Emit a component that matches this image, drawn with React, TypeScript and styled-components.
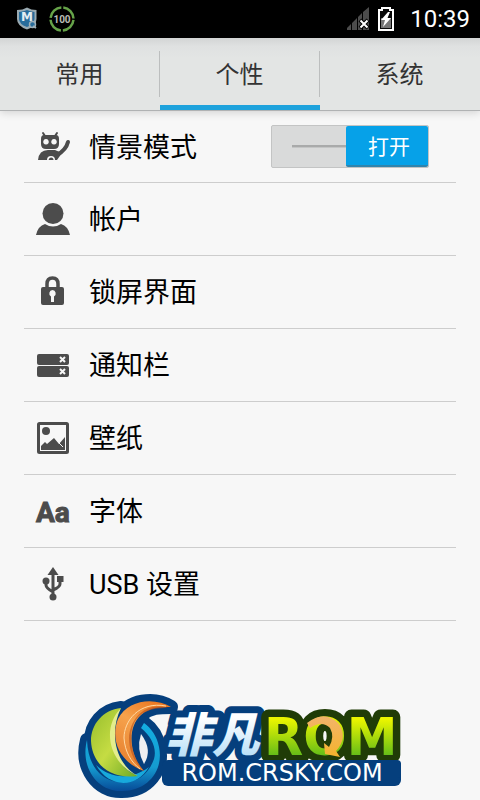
import React, { useState } from "react";
import styled, { createGlobalStyle } from "styled-components";

const GlobalStyle = createGlobalStyle`
  *, *::before, *::after { box-sizing: border-box; }
  body {
    margin: 0;
    background: #f7f7f7;
    font-family: Roboto, "Noto Sans CJK SC", sans-serif;
    color: #000;
  }
  button { font: inherit; color: inherit; border: 0; padding: 0; background: none; cursor: pointer; }
`;

const Page = styled.div`
  display: flex;
  flex-direction: column;
  min-height: 100vh;
`;

const StatusBar = styled.header`
  display: flex;
  align-items: center;
  justify-content: space-between;
  height: 38px;
  padding: 0 10px 0 16px;
  background: #000;
  color: #fff;
`;

const StatusGroup = styled.div<{ $gap: number }>`
  display: flex;
  align-items: center;
  gap: ${(p) => p.$gap}px;
`;

const Clock = styled.time`
  margin-left: 8px;
  font-size: 24px;
  line-height: 38px;
`;

const TabBar = styled.nav`
  display: grid;
  grid-template-columns: repeat(3, 1fr);
  height: 73px;
  border-bottom: 1px solid #b0b2b3;
  background: linear-gradient(#d3d5d5, #dfe1e1 8px, #e3e5e4 20px);
  box-shadow: 0 2px 8px rgba(0, 0, 0, 0.14);
`;

const Tab = styled.button<{ $active: boolean }>`
  display: flex;
  align-items: center;
  justify-content: center;
  padding-top: 4px;
  border-bottom: 5px solid ${(p) => (p.$active ? "#1ea2dc" : "transparent")};
`;

const TabLabel = styled.span<{ $divided: boolean }>`
  flex: 1;
  height: 46px;
  border-right: 1px solid ${(p) => (p.$divided ? "#bcbebe" : "transparent")};
  color: #333;
  font-size: 24px;
  line-height: 48px;
`;

const List = styled.ul`
  margin: 0 24px;
  padding: 0;
  list-style: none;
`;

const Row = styled.li`
  display: flex;
  align-items: center;
  height: 73px;
  padding-right: 27px;
  border-bottom: 1px solid #cdcdcd;
  &:first-child { height: 72px; }
`;

const RowButton = styled.button`
  display: flex;
  flex: 1;
  align-items: center;
  height: 100%;
  gap: 18px;
  padding-left: 11px;
  text-align: left;
`;

const RowIcon = styled.svg`
  flex: none;
  width: 36px;
  height: 36px;
  fill: #4c4c4c;
`;

const RowLabel = styled.span`
  padding-top: 2px;
  font-size: 27px;
  line-height: 36px;
  white-space: nowrap;
`;

const SwitchLabel = styled.label`
  position: relative;
  display: flex;
  width: 158px;
  height: 43px;
  flex: none;
  border: 1px solid #c3c4c4;
  border-radius: 2px;
  background: #d9dada;
  cursor: pointer;
`;

const SwitchInput = styled.input`
  position: absolute;
  inset: 0;
  width: 100%;
  height: 100%;
  margin: 0;
  opacity: 0;
`;

const SwitchGroove = styled.span`
  flex: 1;
  align-self: center;
  height: 3px;
  margin-left: 20px;
  border-top: 2px solid #a9aaaa;
  border-bottom: 1px solid #c4c5c5;
`;

const SwitchThumb = styled.span<{ $on: boolean }>`
  order: ${(p) => (p.$on ? 1 : -1)};
  width: 82px;
  padding-left: 4px;
  border-bottom: 2px solid #3084ad;
  border-radius: 2px;
  background: ${(p) => (p.$on ? "#06a1e8" : "#a3a6a8")};
  color: #fff;
  font-size: 21px;
  line-height: 42px;
  text-align: center;
`;

const Footer = styled.footer`
  display: flex;
  justify-content: center;
  margin-top: auto;
`;

const Logo = styled.svg`
  display: block;
  width: 324px;
  height: 110px;
`;

const ShieldIcon = () => (
  <svg width="22" height="24" viewBox="0 0 22 24" aria-hidden="true">
    <path d="M1 3Q7 3 11 0.5Q15 3 20.500 3V12Q20.500 19 11 22.500Q1 19 1 12Z" fill="#9aaab2" />
    <path d="M3 5Q8 4.500 11 3Q14 4.500 18.500 5V12Q18 17 11 20Q3 17 3 12Z" fill="#286c9b" />
    <text x="11" y="14" textAnchor="middle" fontFamily="DejaVu Sans" fontWeight="700" fontSize="12" fill="#e4edf2">M</text>
    <circle cx="16.500" cy="17.500" r="3" fill="#286c9b" stroke="#9fb0b8" strokeWidth="1.500" />
    <path d="M17 19l3 2" stroke="#9fb0b8" strokeWidth="2" />
  </svg>
);

const PowerIcon = () => (
  <svg width="26" height="26" viewBox="0 0 26 26" aria-hidden="true">
    <circle cx="13" cy="13" r="11.500" fill="none" stroke="#66a349" strokeWidth="2.500" strokeDasharray="16.060 2" strokeDashoffset="-1" />
    <text x="13" y="16.500" textAnchor="middle" fontFamily="Roboto" fontWeight="700" fontSize="10" fill="#b9bdb6">100</text>
  </svg>
);

const SignalIcon = () => (
  <svg width="24" height="24" viewBox="0 0 24 24" aria-hidden="true">
    <path d="M1 23V21L5 17V23ZM6 23V16L11 11V23ZM12 23V10L16 6V23ZM17 23V5L23 0V23Z" fill="#4c4c4c" />
    <path d="M14 13l8 8M22 13l-8 8" stroke="#000" strokeWidth="4" />
    <path d="M14.500 13.500l7 7M21.500 13.500l-7 7" stroke="#fff" strokeWidth="2" />
  </svg>
);

const BatteryIcon = () => (
  <svg width="16" height="24" viewBox="0 0 16 24" aria-hidden="true">
    <path d="M1 3H4V1H12V3H15V23H1Z" fill="#080808" stroke="#fff" strokeWidth="2" />
    <path d="M3 11H13V21H3Z" fill="#777" />
    <path d="M10 5L3 13H7L5 20L13 11H9.500L12 5Z" fill="#fff" />
  </svg>
);

const icons: Record<string, React.ReactNode> = {
  profile: (
    <>
      <path d="M8 4l2 3M22 4l-2 3" fill="none" stroke="#4c4c4c" strokeWidth="2" strokeLinecap="round" />
      <path d="M33 13Q31 21 22 26" fill="none" stroke="#4c4c4c" strokeWidth="4" strokeLinecap="round" />
      <path fillRule="evenodd" d="M9 6H21Q24 6 24 10V15Q24 20 19 20H11Q6 20 6 15V10Q6 6 9 6ZM11 10a2.800 2.800 0 1 0 .01 0ZM19 10a2.800 2.800 0 1 0 .01 0Z" />
      <path d="M3 31Q4 21 13 21H20L27 24L22 31H20Q20 27 16 27Q12 27 12 31Z" />
      <path d="M13.500 31Q14 28.500 16 28.500Q18.500 28.500 18.500 31Z" />
    </>
  ),
  account: (
    <>
      <circle cx="18" cy="12.500" r="10.500" />
      <path d="M1 34Q3 25 10 23Q18 28 26 23Q33 25 35 34Z" />
    </>
  ),
  lock: (
    <>
      <path d="M12 15V10Q12 4 17.500 4Q23 4 23 10V15" fill="none" stroke="#4c4c4c" strokeWidth="3.500" />
      <path fillRule="evenodd" d="M8 13H27Q29 13 29 15V29Q29 31 27 31H8Q6 31 6 29V15Q6 13 8 13ZM17.500 16A3.500 3.500 0 0 0 16 22.500V28H19V22.500A3.500 3.500 0 0 0 17.500 16Z" />
    </>
  ),
  notification: (
    <>
      <rect x="2" y="7" width="32" height="11" rx="2" />
      <rect x="2" y="19" width="32" height="11" rx="2" />
      <path d="M25 10l5 5M30 10l-5 5M25 22l5 5M30 22l-5 5" stroke="#f7f7f7" strokeWidth="2" />
    </>
  ),
  wallpaper: (
    <>
      <rect x="3.500" y="3.500" width="29" height="29" rx="1" fill="none" stroke="#4c4c4c" strokeWidth="3" />
      <circle cx="11" cy="11" r="4" />
      <path d="M6 30V26L10 22L12 24L19 18L24 24L30 17V30Z" />
      <path d="M24 23l4 4" stroke="#f7f7f7" strokeWidth="1" />
    </>
  ),
  font: (
    <text x="1" y="29" fontFamily="Roboto" fontWeight="700" fontSize="28" stroke="#4c4c4c" strokeWidth="1">Aa</text>
  ),
  usb: (
    <>
      <path d="M18 7V32M11 16V19Q11 22 18 26M25 15V18Q25 21 18 24" fill="none" stroke="#4c4c4c" strokeWidth="3" />
      <path d="M18 1L23.500 9H12.500ZM22 10H28.500V16H22Z" />
      <circle cx="11" cy="15" r="3.500" />
      <circle cx="18" cy="31" r="3.500" />
    </>
  ),
};

const items = [
  { icon: "profile", label: "情景模式", toggle: true },
  { icon: "account", label: "帐户" },
  { icon: "lock", label: "锁屏界面" },
  { icon: "notification", label: "通知栏" },
  { icon: "wallpaper", label: "壁纸" },
  { icon: "font", label: "字体" },
  { icon: "usb", label: "USB 设置" },
];

const tabs = ["常用", "个性", "系统"];

const GREEN = "M43 18C25 20 13 34 13 51C14 73 31 90 60 86C36 77 25 46 43 18Z";
const ORANGE = "M93 17C77 7 50 9 40 29C32 49 41 72 66 81C51 65 49 37 63 25C72 17 82 17 93 17Z";
const RING = "M9 50C2 77 19 102 44 101C70 101 86 80 81 57C79 46 73 38 66 33L63 38C74 47 79 59 76 69C70 86 57 94 40 92C23 90 10 76 9 50Z";

const BrandLogo = () => (
  <Logo viewBox="0 0 324 110" role="img" aria-label="非凡ROM ROM.CRSKY.COM">
    <defs>
      <linearGradient id="lime" x1="0" y1="0" x2="1" y2="1">
        <stop offset="0" stopColor="#95bd2c" />
        <stop offset=".5" stopColor="#c5dc43" />
        <stop offset="1" stopColor="#6ca925" />
      </linearGradient>
      <linearGradient id="orange" x1="1" y1="0" x2=".5" y2="1">
        <stop offset="0" stopColor="#e86c16" />
        <stop offset=".5" stopColor="#f6a24c" />
        <stop offset="1" stopColor="#e88432" />
      </linearGradient>
      <linearGradient id="blue" x1="0" y1="0" x2="0" y2="1">
        <stop offset="0" stopColor="#13aee1" />
        <stop offset=".65" stopColor="#159bd0" />
        <stop offset="1" stopColor="#074b98" />
      </linearGradient>
      <linearGradient id="ice" x1="0" y1="0" x2="0" y2="1">
        <stop offset=".3" stopColor="#fff" />
        <stop offset="1" stopColor="#a7d8f6" />
      </linearGradient>
      <linearGradient id="acid" x1="0" y1="0" x2="0" y2="1">
        <stop offset=".2" stopColor="#e9f500" />
        <stop offset=".8" stopColor="#65bd18" />
      </linearGradient>
      <linearGradient id="amber" x1="0" y1="0" x2="0" y2="1">
        <stop offset="0" stopColor="#f2b46b" />
        <stop offset="1" stopColor="#f4b32c" />
      </linearGradient>
    </defs>
    <g fill="#053f7d" stroke="#053f7d" strokeWidth="14" strokeLinejoin="round">
      <path d={GREEN} />
      <path d={ORANGE} />
      <path d={RING} />
    </g>
    <path d="M43 18L57 23L70 40L74 72L55 88L28 77Z" fill="#053f7d" />
    <path d={RING} fill="url(#blue)" />
    <path d="M18 75C32 89 54 90 71 77C58 99 31 98 18 75Z" fill="#17a9dc" />
    <path d={GREEN} fill="url(#lime)" />
    <path d="M43 18C23 38 31 74 60 86C37 74 31 42 43 18Z" fill="#e4ed8d" />
    <path d={ORANGE} fill="url(#orange)" />
    <path d="M90 18C67 11 52 29 51 48C51 62 57 73 66 81C52 65 48 40 61 26C71 18 82 18 90 18Z" fill="#b8501a" opacity=".6" />
    <path d="M88 16C61 11 46 31 46 48C47 62 53 72 62 79" fill="none" stroke="#ffd9a4" strokeWidth="1" />
    <path d="M63 44Q75 60 66 74Q58 59 63 44Z" fill="#eeeff1" />
    <rect x="84" y="70" width="239" height="26" rx="6" fill="#053f7d" />
    <text
      x="87" y="62" fontFamily="Noto Sans CJK SC" fontWeight="900" fontStyle="italic" fontSize="47"
      fill="url(#ice)" stroke="#053f7d" strokeWidth="14" strokeLinejoin="round" paintOrder="stroke"
    >
      非凡
    </text>
    <text
      x="186" y="65" fontFamily="DejaVu Sans" fontWeight="700" fontSize="51"
      fill="url(#acid)" stroke="#203c07" strokeWidth="15" strokeLinejoin="round" paintOrder="stroke"
    >
      ROM
    </text>
    <path d="M229 33Q247 19 261 34Q270 48 258 61L262 67L247 64L246 53L251 57Q257 47 252 38Q244 30 232 38Z" fill="url(#amber)" />
    <rect x="170" y="70" width="153" height="18" rx="4" fill="#053f7d" />
    <text x="204" y="91" textAnchor="middle" fontFamily="DejaVu Sans" fontSize="24" fill="#fff">ROM.CRSKY.COM</text>
  </Logo>
);

export default function App() {
  const [active, setActive] = useState(1);
  const [on, setOn] = useState(true);

  return (
    <Page>
      <GlobalStyle />
      <StatusBar>
        <StatusGroup $gap={11}>
          <ShieldIcon />
          <PowerIcon />
        </StatusGroup>
        <StatusGroup $gap={8}>
          <SignalIcon />
          <BatteryIcon />
          <Clock>10:39</Clock>
        </StatusGroup>
      </StatusBar>
      <TabBar>
        {tabs.map((tab, i) => (
          <Tab key={tab} $active={i === active} aria-pressed={i === active} onClick={() => setActive(i)}>
            <TabLabel $divided={i < tabs.length - 1}>{tab}</TabLabel>
          </Tab>
        ))}
      </TabBar>
      <List>
        {items.map((item) => (
          <Row key={item.icon}>
            <RowButton>
              <RowIcon viewBox="0 0 36 36" aria-hidden="true">{icons[item.icon]}</RowIcon>
              <RowLabel>{item.label}</RowLabel>
            </RowButton>
            {item.toggle && (
              <SwitchLabel>
                <SwitchInput
                  type="checkbox"
                  role="switch"
                  aria-label={item.label}
                  checked={on}
                  onChange={(e) => setOn(e.target.checked)}
                />
                <SwitchGroove />
                <SwitchThumb $on={on}>{on ? "打开" : "关闭"}</SwitchThumb>
              </SwitchLabel>
            )}
          </Row>
        ))}
      </List>
      <Footer>
        <BrandLogo />
      </Footer>
    </Page>
  );
}
